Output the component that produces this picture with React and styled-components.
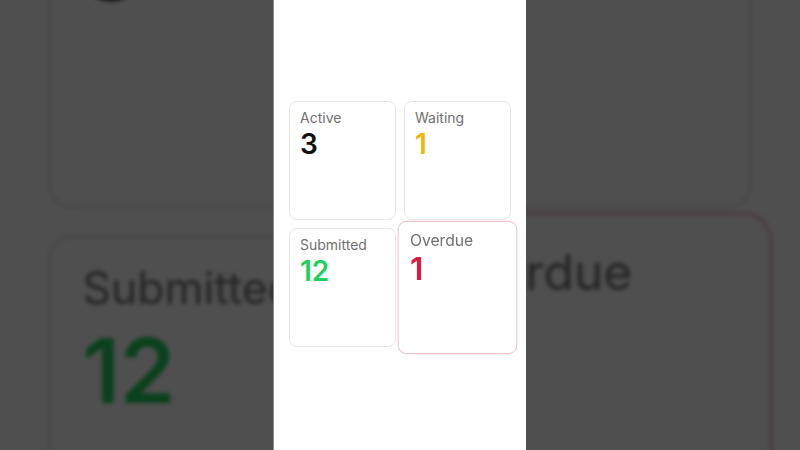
import styled, { createGlobalStyle } from "styled-components";

const stats = [
  { id: "active", label: "Active", value: 3, tone: "#111111" },
  { id: "waiting", label: "Waiting", value: 1, tone: "#f2b705" },
  { id: "submitted", label: "Submitted", value: 12, tone: "#1fd15c" },
  { id: "overdue", label: "Overdue", value: 1, tone: "#e0173f", alert: true },
];

const GlobalStyle = createGlobalStyle`
  html, body {
    margin: 0;
    padding: 0;
    background: #4e4e4e;
    overflow: hidden;
  }
  body {
    font-family: Inter, "Noto Sans", "Liberation Sans", sans-serif;
  }
`;

const Stage = styled.div`
  width: 800px;
  height: 450px;
  position: relative;
  overflow: hidden;
  display: flex;
  justify-content: center;
  background: #4e4e4e;
`;

/* blown-up, darkened copy of the phone screen behind it */
const Backdrop = styled.div`
  position: absolute;
  inset: 0;
  display: flex;
  justify-content: center;
  transform: scale(3.175);
  transform-origin: 400px 225px;
  filter: brightness(0.31) blur(0.6px);
  pointer-events: none;
`;

const Screen = styled.div`
  width: 252px;
  height: 450px;
  flex-shrink: 0;
  background: #ffffff;
  display: flex;
  align-items: center;
  justify-content: center;
  padding-bottom: 2px;
  box-sizing: border-box;
  position: relative;
  box-shadow: ${(props) => (props.$front ? "-1px 0 0 #8c8c8c" : "none")};
`;

const Grid = styled.div`
  display: grid;
  grid-template-columns: repeat(2, 107px);
  grid-auto-rows: 119px;
  gap: 8px;
`;

const Card = styled.div`
  box-sizing: border-box;
  border: 1px solid ${(props) => (props.$alert ? "#f4c3cc" : "#e6e6e6")};
  border-radius: 8px;
  background: #ffffff;
  padding: 7px 10px;
  display: flex;
  flex-direction: column;
  transform: ${(props) => (props.$alert ? "scale(1.12)" : "none")};
  position: relative;
  z-index: ${(props) => (props.$alert ? 1 : 0)};
`;

const Label = styled.div`
  font-size: 14px;
  line-height: 17px;
  color: #707070;
  margin-bottom: 1px;
`;

const Value = styled.div`
  font-size: 28px;
  line-height: 34px;
  font-weight: 600;
  color: ${(props) => props.$tone};
`;

const StatGrid = () => (
  <Grid>
    {stats.map((s) => (
      <Card key={s.id} $alert={s.alert}>
        <Label>{s.label}</Label>
        <Value $tone={s.tone}>{s.value}</Value>
      </Card>
    ))}
  </Grid>
);

export default function App() {
  return (
    <>
      <GlobalStyle />
      <Stage>
        <Backdrop>
          <Screen>
            <StatGrid />
          </Screen>
        </Backdrop>
        <Screen $front>
          <StatGrid />
        </Screen>
      </Stage>
    </>
  );
}
